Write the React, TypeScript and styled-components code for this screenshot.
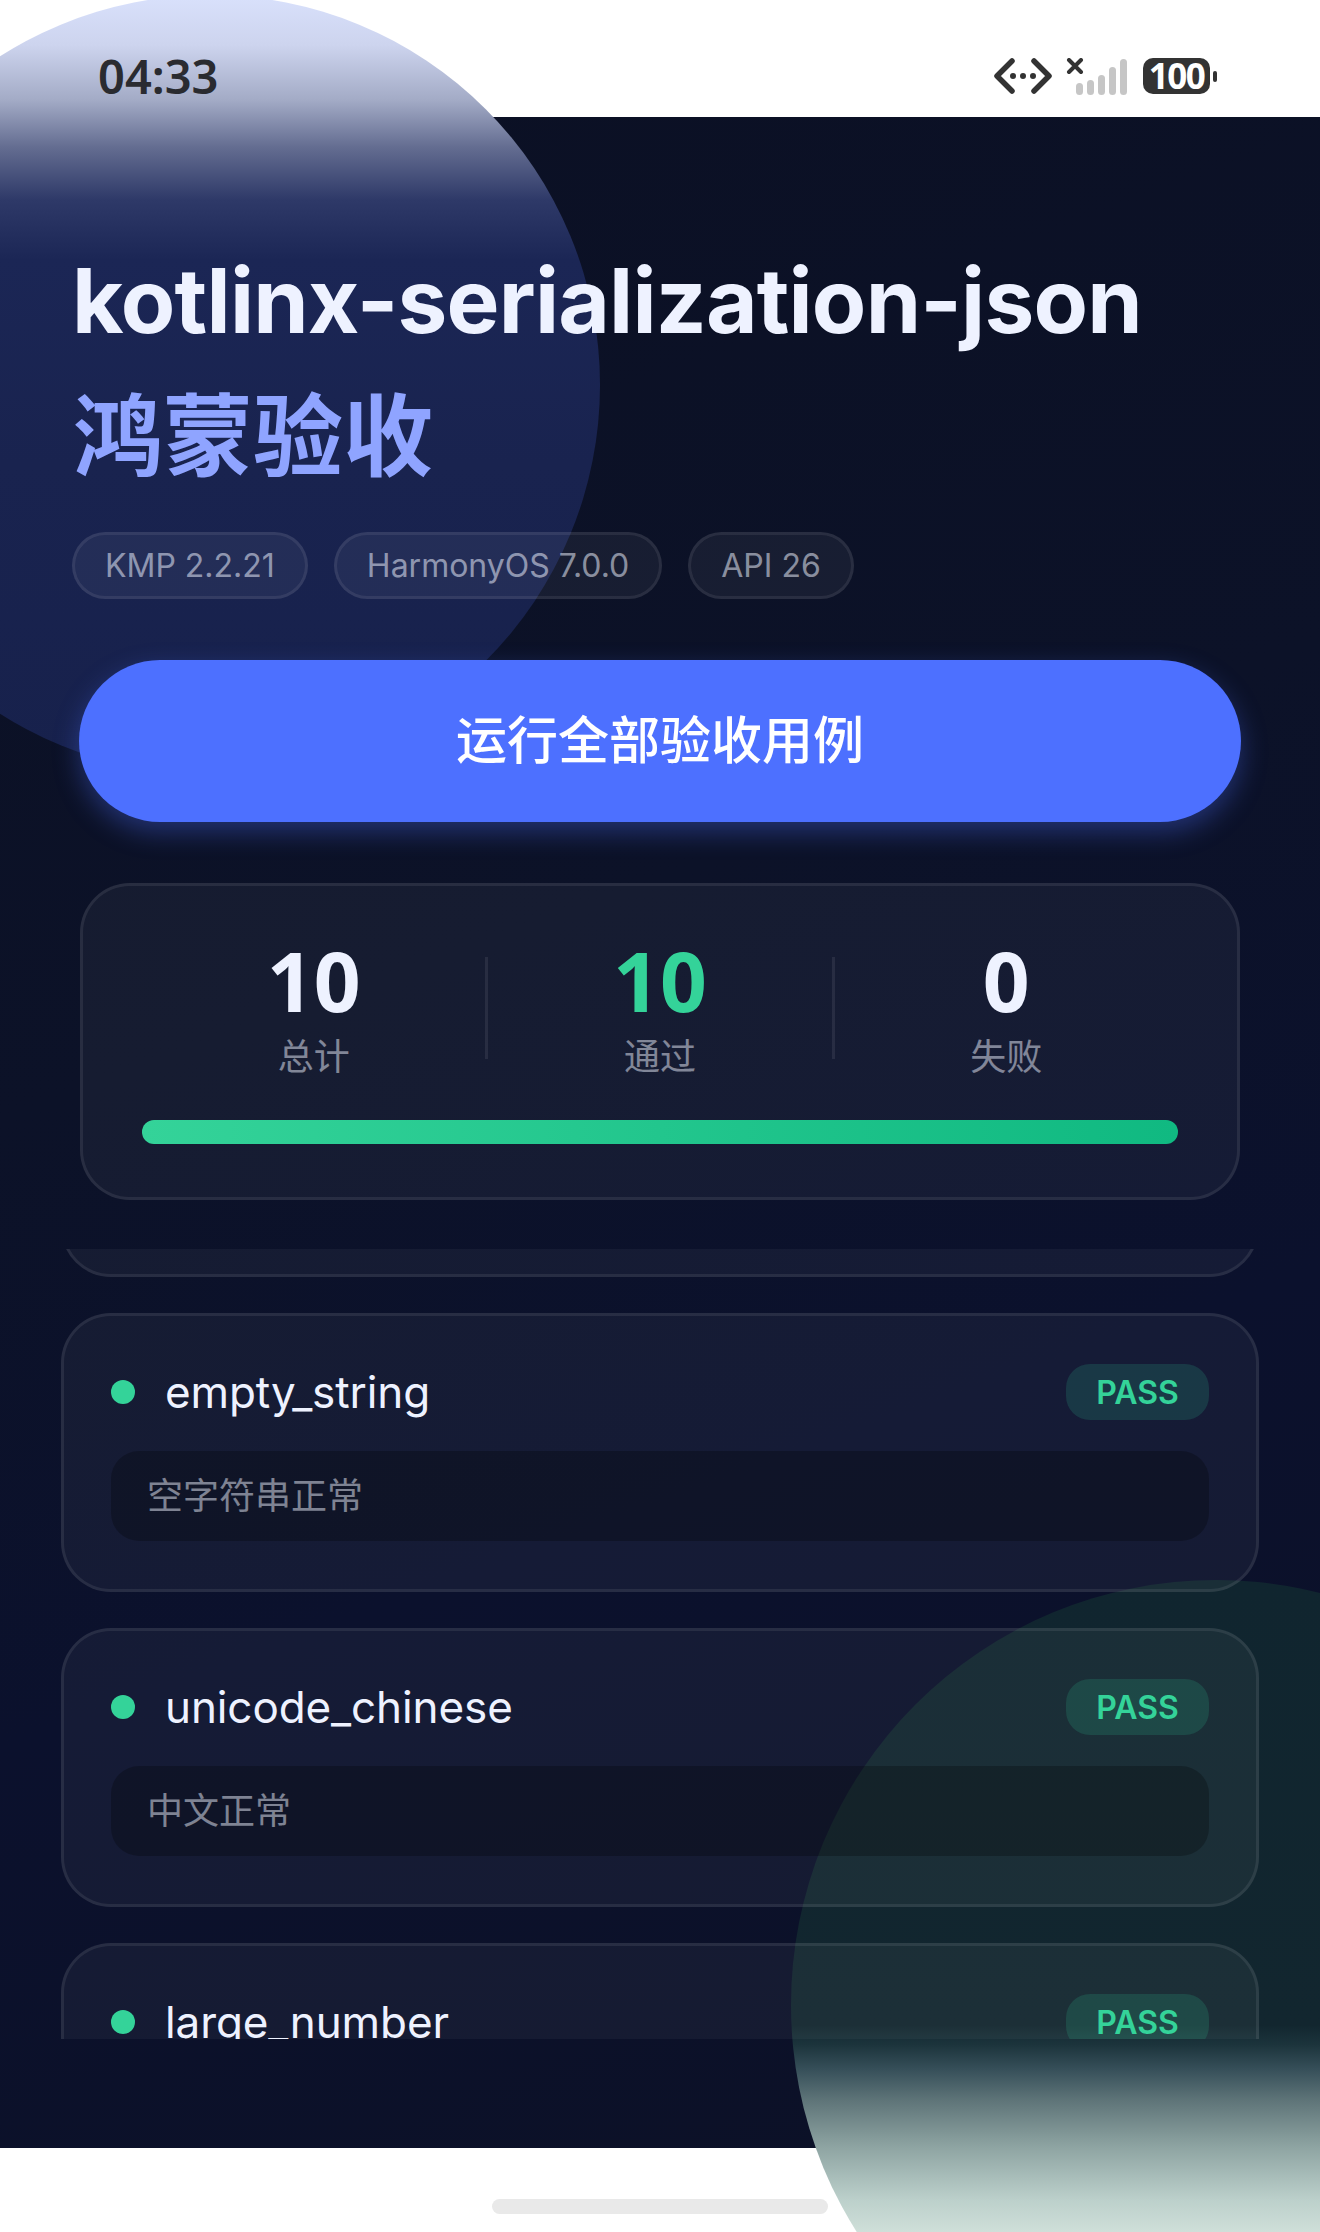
import React from 'react'
import styled, { createGlobalStyle } from 'styled-components'

const cases = [
  { name: 'empty_string', detail: '空字符串正常' },
  { name: 'unicode_chinese', detail: '中文正常' },
  { name: 'large_number', detail: '' },
]

const stats = [
  { value: '10', label: '总计', green: false },
  { value: '10', label: '通过', green: true },
  { value: '0', label: '失败', green: false },
]

export default function App() {
  return (
    <Page>
      <GlobalStyle />
      <BlueCircle />
      <GreenCircle />
      <StatusBar>
        <Time>04:33</Time>
        <StatusIcons>
          <svg width="58" height="36" viewBox="0 0 58 36" fill="none">
            <path d="M18 3 L3 18 L18 33 M40 3 L55 18 L40 33" stroke="#333" strokeWidth="5.5" strokeLinecap="round" strokeLinejoin="round" />
            <circle cx="19" cy="18" r="3" fill="#333" />
            <circle cx="29" cy="18" r="3" fill="#333" />
            <circle cx="39" cy="18" r="3" fill="#333" />
          </svg>
          <svg width="62" height="38" viewBox="0 0 62 38" fill="none">
            <path d="M3 2 L15 14 M15 2 L3 14" stroke="#333" strokeWidth="4" strokeLinecap="round" />
            <rect x="10" y="25" width="7" height="12" rx="3.5" fill="#c6c6c6" />
            <rect x="21" y="22" width="7" height="15" rx="3.5" fill="#c6c6c6" />
            <rect x="32" y="17" width="7" height="20" rx="3.5" fill="#c6c6c6" />
            <rect x="43" y="9" width="7" height="28" rx="3.5" fill="#c6c6c6" />
            <rect x="54" y="1" width="7" height="36" rx="3.5" fill="#c6c6c6" />
          </svg>
          <Battery>
            <BatteryBody>100</BatteryBody>
            <BatteryTip />
          </Battery>
        </StatusIcons>
      </StatusBar>
      <Screen>
        <Header>
          <Title>kotlinx-serialization-json</Title>
          <Subtitle>鸿蒙验收</Subtitle>
          <Tags>
            <Tag>KMP 2.2.21</Tag>
            <Tag>HarmonyOS 7.0.0</Tag>
            <Tag>API 26</Tag>
          </Tags>
        </Header>
        <RunButton>运行全部验收用例</RunButton>
        <Summary>
          <StatRow>
            {stats.map((s, i) => (
              <React.Fragment key={s.label}>
                {i > 0 && <StatDivider />}
                <Stat>
                  <StatValue $green={s.green}>{s.value}</StatValue>
                  <StatLabel>{s.label}</StatLabel>
                </Stat>
              </React.Fragment>
            ))}
          </StatRow>
          <Progress />
        </Summary>
        <List>
          <ScrolledCard />
          {cases.map((c) => (
            <Card key={c.name}>
              <CardTop>
                <Dot />
                <CaseName>{c.name}</CaseName>
                <PassBadge>PASS</PassBadge>
              </CardTop>
              <Detail>{c.detail}</Detail>
            </Card>
          ))}
        </List>
      </Screen>
      <HomeBar>
        <HomeIndicator />
      </HomeBar>
    </Page>
  )
}

const GlobalStyle = createGlobalStyle`
  html, body {
    margin: 0;
    padding: 0;
    background: #fff;
  }
  * {
    box-sizing: border-box;
  }
`

const latin = `Inter, "Noto Sans CJK SC", sans-serif`
const cjk = `"Noto Sans CJK SC", "Noto Sans", sans-serif`

const Page = styled.div`
  position: relative;
  width: 1320px;
  height: 2232px;
  overflow: hidden;
  background: #fff;
  font-family: ${latin};
`

const BlueCircle = styled.div`
  position: absolute;
  left: -180px;
  top: -5px;
  width: 780px;
  height: 780px;
  border-radius: 50%;
  z-index: 1;
  background: linear-gradient(
    180deg,
    #d9e1fc 0,
    #cdd4ee 50px,
    #a3abc6 105px,
    #646d91 152px,
    #2e3968 205px,
    #1b2655 265px,
    #19234f 60%,
    #17214c 100%
  );
`

const GreenCircle = styled.div`
  position: absolute;
  left: 791px;
  top: 1580px;
  width: 850px;
  height: 850px;
  border-radius: 50%;
  z-index: 1;
  background: linear-gradient(
    180deg,
    #10252f 0,
    #12262f 445px,
    #1c343c 465px,
    #37505a 490px,
    #5e7478 520px,
    #8fa5a3 568px,
    #bcd0cb 620px,
    #cfdfd9 652px
  );
`

const StatusBar = styled.div`
  position: relative;
  z-index: 2;
  height: 117px;
  padding: 0 103px 0 98px;
  display: flex;
  align-items: flex-start;
  justify-content: space-between;
`

const Time = styled.div`
  margin-top: 46px;
  font-family: "Noto Sans", sans-serif;
  font-size: 47px;
  line-height: 60px;
  font-weight: 600;
  color: #2a2b30;
`

const StatusIcons = styled.div`
  display: flex;
  align-items: flex-start;
  gap: 14px;
  margin-top: 58px;
`

const Battery = styled.div`
  display: flex;
  align-items: center;
  gap: 3px;
  margin-left: 1px;
`

const BatteryBody = styled.div`
  width: 67px;
  height: 36px;
  border-radius: 10px;
  background: #333;
  color: #fff;
  font-family: "Noto Sans", sans-serif;
  font-size: 35px;
  line-height: 36px;
  font-weight: 700;
  letter-spacing: -1.5px;
  text-align: center;
`

const BatteryTip = styled.div`
  width: 4px;
  height: 11px;
  border-radius: 2px;
  background: #333;
`

const Screen = styled.div`
  height: 2031px;
  background: linear-gradient(160deg, #0b1024 0%, #0c1228 40%, #0b112d 65%, #0c1126 100%);
  display: flex;
  flex-direction: column;
  align-items: flex-start;
`

const Header = styled.div`
  position: relative;
  z-index: 2;
  padding: 134px 0 0 72px;
`

const Title = styled.h1`
  margin: 0;
  font-size: 89px;
  line-height: 100px;
  font-weight: 650;
  letter-spacing: -0.8px;
  color: #eef2ff;
  white-space: nowrap;
`

const Subtitle = styled.div`
  margin: 24px 0 0 1px;
  font-family: ${cjk};
  font-size: 90px;
  line-height: 110px;
  font-weight: 700;
  color: #8fa4ff;
`

const Tags = styled.div`
  display: flex;
  gap: 26px;
  margin-top: 47px;
`

const Tag = styled.div`
  height: 67px;
  padding: 0 30px;
  display: flex;
  align-items: center;
  border-radius: 34px;
  border: 3px solid rgba(255, 255, 255, 0.08);
  background: rgba(255, 255, 255, 0.05);
  font-size: 32px;
  font-weight: 400;
  color: rgba(238, 242, 255, 0.55);
`

const RunButton = styled.button`
  position: relative;
  z-index: 2;
  width: 1162px;
  height: 162px;
  margin: 61px 0 0 79px;
  padding: 0 0 9px;
  border: 0;
  border-radius: 81px;
  background: #4d70ff;
  box-shadow: 0 10px 26px rgba(77, 112, 255, 0.35);
  color: #fff;
  font-family: ${cjk};
  font-size: 51px;
  font-weight: 500;
`

const Summary = styled.div`
  position: relative;
  z-index: 2;
  width: 1160px;
  margin: 61px 0 0 80px;
  padding: 52px 59px 53px;
  border-radius: 50px;
  border: 3px solid rgba(255, 255, 255, 0.08);
  background: rgba(255, 255, 255, 0.045);
`

const StatRow = styled.div`
  display: flex;
  align-items: center;
`

const Stat = styled.div`
  flex: 1;
  display: flex;
  flex-direction: column;
  align-items: center;
  gap: 9px;
`

const StatValue = styled.div<{ $green: boolean }>`
  font-family: "Noto Sans", sans-serif;
  font-size: 82px;
  line-height: 84px;
  font-weight: 700;
  color: ${(props) => (props.$green ? '#34d399' : '#eef2ff')};
`

const StatLabel = styled.div`
  font-family: ${cjk};
  font-size: 36px;
  line-height: 47px;
  color: rgba(238, 242, 255, 0.5);
`

const StatDivider = styled.div`
  width: 3px;
  height: 102px;
  background: rgba(255, 255, 255, 0.08);
`

const Progress = styled.div`
  height: 24px;
  margin-top: 42px;
  border-radius: 12px;
  background: linear-gradient(90deg, #34d399, #10b981);
`

const List = styled.div`
  position: relative;
  z-index: 2;
  width: 1198px;
  height: 790px;
  margin: 49px 0 0 61px;
  overflow: hidden;
  display: flex;
  flex-direction: column;
  gap: 36px;
`

const Card = styled.div`
  flex: none;
  height: 279px;
  padding: 48px 47px;
  border-radius: 50px;
  border: 3px solid rgba(255, 255, 255, 0.08);
  background: rgba(255, 255, 255, 0.045);
`

const ScrolledCard = styled(Card)`
  margin-top: -251px;
`

const CardTop = styled.div`
  height: 56px;
  display: flex;
  align-items: center;
`

const Dot = styled.div`
  width: 24px;
  height: 24px;
  border-radius: 50%;
  background: #34d399;
`

const CaseName = styled.div`
  flex: 1;
  margin-left: 30px;
  font-size: 44px;
  font-weight: 400;
  letter-spacing: -0.1px;
  color: #eef2ff;
`

const PassBadge = styled.div`
  width: 143px;
  height: 56px;
  border-radius: 24px;
  background: rgba(52, 211, 153, 0.16);
  display: flex;
  align-items: center;
  justify-content: center;
  font-size: 32px;
  font-weight: 600;
  color: #34d399;
`

const Detail = styled.div`
  height: 90px;
  margin-top: 31px;
  padding: 0 36px 6px;
  display: flex;
  align-items: center;
  border-radius: 28px;
  background: rgba(0, 0, 0, 0.25);
  font-family: ${cjk};
  font-size: 36px;
  color: rgba(238, 242, 255, 0.5);
`

const HomeBar = styled.div`
  height: 84px;
  padding-top: 51px;
  display: flex;
  justify-content: center;
`

const HomeIndicator = styled.div`
  width: 336px;
  height: 15px;
  border-radius: 8px;
  background: #e9e9e9;
`
